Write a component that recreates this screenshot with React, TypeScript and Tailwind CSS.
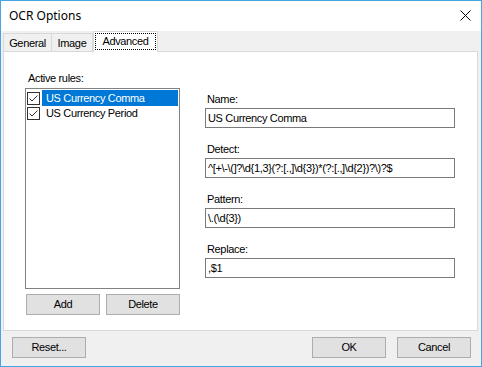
import React from "react";

const Check = () => (
  <div className="w-[13px] h-[13px] border border-[#333333] bg-white flex-none">
    <svg width="11" height="11" viewBox="0 0 11 11" className="block">
      <path d="M1.5 5.5 L4 8 L9.5 2.5" fill="none" stroke="#333333" strokeWidth="1" />
    </svg>
  </div>
);

const Btn = ({ label, className = "" }: { label: string; className?: string }) => (
  <div
    className={
      "w-[74px] h-[21px] border border-[#adadad] bg-[#e1e1e1] flex items-center justify-center text-[11px] text-black " +
      className
    }
  >
    {label}
  </div>
);

const Field = ({ label, value }: { label: string; value: string }) => (
  <div className="flex flex-col mb-[15px]">
    <div className="h-[13px] leading-[13px] pl-[2px] text-[11px]">{label}</div>
    <div className="mt-[2px] w-[250px] h-[20px] border border-[#7a7a7a] bg-white flex items-center pl-[2px] text-[11px] leading-[13px] whitespace-nowrap overflow-hidden">
      {value}
    </div>
  </div>
);

export default function App() {
  return (
    <div
      className="w-[482px] h-[367px] border border-[#46a3e4] bg-[#f0f0f0] flex flex-col text-black tracking-[-0.35px]"
      style={{ fontFamily: '"Liberation Sans", Arial, sans-serif' }}
    >
      {/* Title bar */}
      <div className="h-[30px] bg-white flex items-center justify-between flex-none">
        <span
          className="pl-[8px] text-[12px] leading-[16px] tracking-normal"
          style={{ fontFamily: '"Noto Sans", sans-serif' }}
        >
          OCR Options
        </span>
        <svg width="11" height="11" viewBox="0 0 11 11" className="mr-[10px] mb-[1px]">
          <path d="M0.5 0.5 L10.5 10.5 M10.5 0.5 L0.5 10.5" stroke="#000" strokeWidth="1" fill="none" />
        </svg>
      </div>

      {/* Tabs */}
      <div className="h-[20px] flex items-end ml-[2px] relative z-10 flex-none">
        <div className="w-[49px] h-[18px] border-l border-t border-r border-[#d9d9d9] flex items-center justify-center text-[11px] pt-[2px]">
          General
        </div>
        <div className="w-[41px] h-[18px] border-t border-r border-[#d9d9d9] flex items-center justify-center text-[11px] pt-[2px]">
          Image
        </div>
        <div className="w-[65px] h-[21px] -mb-[1px] border-l border-t border-r border-[#d9d9d9] bg-white pl-[1px] pr-[1px] pt-[1px] pb-[2px] flex">
          <div className="flex-1 border border-dotted border-black flex items-center justify-center text-[11px]">
            Advanced
          </div>
        </div>
      </div>

      {/* Panel */}
      <div className="ml-[2px] w-[475px] h-[280px] border border-[#d9d9d9] bg-white flex flex-none">
        {/* Left column */}
        <div className="ml-[21px] pt-[20px] w-[155px] flex flex-col">
          <div className="h-[13px] leading-[13px] pl-[3px] text-[11px]">Active rules:</div>
          <div className="mt-[3px] h-[201px] border border-[#828282] bg-white pl-[1px] pt-[1px] flex flex-col">
            <div className="h-[15px] flex items-start">
              <div className="mt-[2px]">
                <Check />
              </div>
              <div className="ml-[2px] mr-[1px] flex-1 h-[16px] bg-[#0078d7] text-white text-[11px] leading-[16px] pl-[4px]">
                US Currency Comma
              </div>
            </div>
            <div className="h-[15px] flex items-start">
              <div className="mt-[2px]">
                <Check />
              </div>
              <div className="ml-[2px] flex-1 h-[16px] text-[11px] leading-[16px] pl-[4px]">
                US Currency Period
              </div>
            </div>
          </div>
          <div className="mt-[5px] flex gap-[6px] ml-[1px]">
            <Btn label="Add" />
            <Btn label="Delete" />
          </div>
        </div>

        {/* Right column */}
        <div className="ml-[25px] pt-[41px] flex flex-col">
          <Field label="Name:" value="US Currency Comma" />
          <Field label="Detect:" value={"^[+\\-\\(]?\\d{1,3}(?:[.,]\\d{3})*(?:[.,]\\d{2})?\\)?$"} />
          <Field label="Pattern:" value={"\\.(\\d{3})"} />
          <Field label="Replace:" value={",$1"} />
        </div>
      </div>

      {/* Footer */}
      <div className="flex pt-[6px] flex-none">
        <Btn label="Reset..." className="ml-[11px]" />
        <div className="flex-1" />
        <Btn label="OK" />
        <Btn label="Cancel" className="ml-[11px] mr-[10px]" />
      </div>
    </div>
  );
}
